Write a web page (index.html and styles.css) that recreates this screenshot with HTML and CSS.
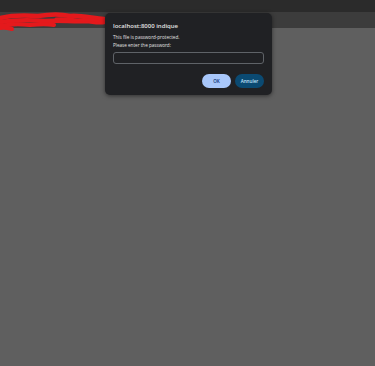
FILE: index.html
```html
<!DOCTYPE html>
<html>
<head>
    <meta name="viewport" content="width=device-width,initial-scale=1.0">
    <title>Password</title>
    <link rel="stylesheet" href="styles.css">
</head>
<body>
    <div class="window">
        <div class="top-bar"></div>
        <div class="address-bar"></div>
        <div class="page"></div>

        <svg class="scribble" width="110" height="24" viewBox="0 0 110 24">
            <path d="M0 6 C 12 3, 25 3, 38 4 C 50 2, 62 2, 70 4 C 80 3, 92 6, 104 7" stroke="#e4191c" stroke-width="4.5" fill="none" stroke-linecap="round"/>
            <path d="M0 10 C 15 8, 30 8, 45 9 C 60 8, 75 10, 88 9 C 95 10, 100 11, 104 10" stroke="#e4191c" stroke-width="4.5" fill="none" stroke-linecap="round"/>
            <path d="M0 14 C 10 12, 20 12, 30 13 C 40 12, 48 12, 54 13 M0 16 C 5 15, 8 16, 12 17" stroke="#e4191c" stroke-width="4" fill="none" stroke-linecap="round"/>
            <path d="M56 7 C 62 6, 70 7, 78 8 C 84 7, 92 8, 98 9" stroke="#e4191c" stroke-width="3" fill="none" stroke-linecap="round"/>
        </svg>

        <div class="dialog">
            <div class="dialog-title">localhost:8000 indique</div>
            <div class="dialog-text">This file is password-protected.</div>
            <div class="dialog-text">Please enter the password:</div>
            <div class="dialog-input"></div>
            <div class="dialog-buttons">
                <button class="btn-ok">OK</button>
                <button class="btn-cancel">Annuler</button>
            </div>
        </div>
    </div>
</body>
</html>
```
FILE: styles.css
```css
* {
    margin: 0;
    padding: 0;
    box-sizing: border-box;
    font-family: "Open Sans", "Liberation Sans", sans-serif;
}

body {
    background: #5f5f5f;
}

.window {
    position: relative;
    width: 375px;
    height: 366px;
    display: flex;
    flex-direction: column;
}

.top-bar {
    height: 12px;
    background: #2b2b2b;
}

.address-bar {
    height: 16px;
    background: #3c3c3c;
}

.page {
    flex: 1;
    background: #5f5f5f;
}

.scribble {
    position: absolute;
    top: 12px;
    left: 0;
}

.dialog {
    position: absolute;
    top: 13px;
    left: 105px;
    width: 167px;
    height: 82px;
    background: #202124;
    border-radius: 5px;
    box-shadow: 0 1px 4px rgba(0, 0, 0, 0.5);
    padding: 9px 8px 0 8px;
    color: #e3e3e3;
}

.dialog-title {
    font-size: 6px;
    font-weight: 600;
    line-height: 8px;
    margin-bottom: 3px;
}

.dialog-text {
    font-size: 4.6px;
    line-height: 8px;
}

.dialog-input {
    margin-top: 3px;
    height: 12px;
    border: 1px solid #5f6368;
    border-radius: 3px;
}

.dialog-buttons {
    display: flex;
    justify-content: flex-end;
    gap: 4px;
    margin-top: 10px;
}

.dialog-buttons button {
    width: 29px;
    height: 14px;
    border: none;
    border-radius: 7px;
    font-size: 4.6px;
    font-weight: 600;
}

.btn-ok {
    background: #a8c7fa;
    color: #062e6f;
}

.btn-cancel {
    background: #0b4a72;
    color: #c2e7ff;
}
```
